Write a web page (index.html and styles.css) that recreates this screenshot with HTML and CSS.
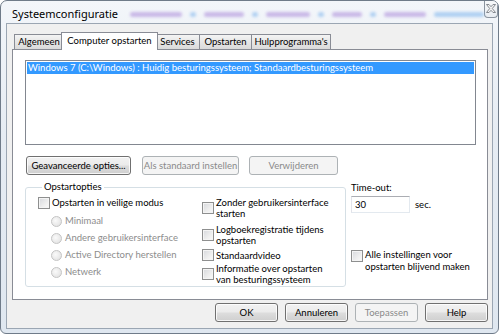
FILE: index.html
```html
<!DOCTYPE html>
<html lang="nl">

<head>
    <meta charset="UTF-8">
    <meta name="viewport" content="width=device-width, initial-scale=1.0">
    <title>Systeemconfiguratie</title>
    <link rel="stylesheet" href="styles.css">
</head>

<body>
    <div class="window">
        <div class="titlebar">
            <svg class="app-icon" width="16" height="16" viewBox="0 0 16 16">
                <rect x="1.5" y="1.5" width="12" height="10" rx="1" fill="#4f7fc4" stroke="#3b5a8a" />
                <rect x="3" y="3" width="9" height="7" fill="#9fd0f5" />
                <path d="M5 7 l2 2 l4 -5" fill="none" stroke="#2a5d9e" stroke-width="1.2" />
                <path d="M6 12 h3 l1 2 h-5 z" fill="#8a8f96" />
            </svg>
            <span class="title">Systeemconfiguratie</span>
            <div class="glass">
                <span class="blob purple w52"></span>
                <span class="blob blue w6"></span>
                <span class="blob purple w40"></span>
                <span class="blob blue w6"></span>
                <span class="blob purple w44"></span>
                <span class="blob blue w6"></span>
                <span class="blob purple w30"></span>
                <span class="blob blue w6"></span>
                <span class="blob purple w42"></span>
                <span class="blob blue w50"></span>
            </div>
            <div class="close">
                <svg width="12" height="11" viewBox="0 0 12 11">
                    <path d="M1.5 1.5 h2.5 l2 2.2 l2 -2.2 h2.5 l-3.2 4 l3.2 4 h-2.5 l-2 -2.2 l-2 2.2 h-2.5 l3.2 -4 z"
                        fill="#f4f4f4" stroke="#7a7f86" stroke-width="0.9" stroke-linejoin="round" />
                </svg>
            </div>
        </div>

        <div class="client">
            <ul class="tabs">
                <li class="tab t-alg">Algemeen</li>
                <li class="tab active">Computer opstarten</li>
                <li class="tab t-srv">Services</li>
                <li class="tab t-ops">Opstarten</li>
                <li class="tab t-hlp">Hulpprogramma's</li>
            </ul>

            <div class="panel">
                <div class="listbox">
                    <div class="item selected">Windows 7 (C:\Windows) : Huidig besturingssysteem; Standaardbesturingssysteem</div>
                </div>

                <div class="btn-row">
                    <button class="btn b-adv">Geavanceerde opties...</button>
                    <button class="btn b-std" disabled>Als standaard instellen</button>
                    <button class="btn b-del" disabled>Verwijderen</button>
                </div>

                <div class="options">
                    <fieldset class="group">
                        <legend>Opstartopties</legend>
                        <div class="col-left">
                            <label class="check"><span class="box"></span>Opstarten in veilige modus</label>
                            <div class="radios">
                                <label class="radio"><span class="dot"></span>Minimaal</label>
                                <label class="radio"><span class="dot"></span>Andere gebruikersinterface</label>
                                <label class="radio"><span class="dot"></span>Active Directory herstellen</label>
                                <label class="radio"><span class="dot"></span>Netwerk</label>
                            </div>
                        </div>
                        <div class="col-right">
                            <label class="check two r1"><span class="box"></span><span>Zonder gebruikersinterface<br>starten</span></label>
                            <label class="check two r2"><span class="box"></span><span>Logboekregistratie tijdens<br>opstarten</span></label>
                            <label class="check r3"><span class="box"></span><span>Standaardvideo</span></label>
                            <label class="check two r4"><span class="box"></span><span>Informatie over opstarten<br>van besturingssysteem</span></label>
                        </div>
                    </fieldset>

                    <div class="timeout">
                        <div class="t-label">Time-out:</div>
                        <div class="t-field">
                            <span class="textbox">30</span>
                            <span>sec.</span>
                        </div>
                        <label class="check keep"><span class="box"></span><span>Alle instellingen voor<br>opstarten blijvend maken</span></label>
                    </div>
                </div>
            </div>

            <div class="footer">
                <button class="btn b-foot">OK</button>
                <button class="btn b-foot">Annuleren</button>
                <button class="btn b-foot" disabled>Toepassen</button>
                <button class="btn b-foot">Help</button>
            </div>
        </div>
    </div>
</body>

</html>
```

FILE: styles.css
```css
* {
    padding: 0;
    margin: 0;
    box-sizing: border-box;
}

body {
    width: 500px;
    height: 335px;
    background-color: #fff;
    font-family: Lato, "Liberation Sans", sans-serif;
    font-size: 9.5px;
    line-height: 12px;
    color: #000;
    overflow: hidden;
}

/* venster met glasrand */
.window {
    width: 499px;
    height: 334px;
    border: 1px solid #6f7b89;
    border-radius: 7px 7px 6px 6px;
    background: linear-gradient(180deg, #f3f6fa 0%, #e6ecf3 40%, #dfe7f0 100%);
    padding: 0 5px 4px 5px;
    display: flex;
    flex-direction: column;
    overflow: hidden;
}

.titlebar {
    height: 22px;
    display: flex;
    align-items: center;
    flex-shrink: 0;
}

.app-icon {
    margin-left: 2px;
    margin-top: 1px;
}

.title {
    margin-left: 4px;
    font-family: "Noto Sans", sans-serif;
    font-size: 11px;
    margin-top: 3px;
}

.glass {
    display: flex;
    align-items: center;
    gap: 8px;
    margin-left: 12px;
    margin-top: 4px;
    filter: blur(1.6px);
    opacity: 0.55;
}

.blob {
    height: 5px;
    border-radius: 3px;
}

.purple {
    background-color: #a887d8;
}

.blue {
    background-color: #79b2ec;
}

.w6 { width: 6px; }
.w30 { width: 30px; }
.w40 { width: 40px; }
.w42 { width: 42px; }
.w44 { width: 44px; }
.w50 { width: 50px; }
.w52 { width: 52px; }

.close {
    margin-left: auto;
    align-self: flex-start;
    margin-top: -1px;
    width: 40px;
    height: 18px;
    border: 1px solid #8a939e;
    border-top: none;
    border-radius: 0 0 4px 4px;
    background: linear-gradient(180deg, #f8f9fb, #e9edf2);
    display: flex;
    align-items: center;
    justify-content: center;
}

/* clientgebied */
.client {
    flex: 1;
    background-color: #f0f0f0;
    border: 1px solid #9ba6b3;
    padding: 8px 4px 0 5px;
    display: flex;
    flex-direction: column;
}

.tabs {
    list-style: none;
    display: flex;
    align-items: flex-end;
    margin-left: 2px;
    height: 17px;
    position: relative;
    z-index: 1;
}

.tab {
    height: 15px;
    border: 1px solid #898c95;
    border-bottom: none;
    border-right: none;
    background: linear-gradient(180deg, #f4f4f4 0%, #e6e6e6 50%, #dadada 100%);
    line-height: 13px;
    white-space: nowrap;
    text-align: center;
}

.t-hlp {
    border-right: 1px solid #898c95;
}

.tab.active {
    height: 18px;
    margin: 0 -2px -1px -2px;
    background: #fff;
    border-right: 1px solid #898c95;
    line-height: 16px;
    position: relative;
}

.t-alg { width: 49px; }
.tab.active { width: 97px; }
.t-srv { width: 43px; border-left: none; }
.t-ops { width: 52px; }
.t-hlp { width: 80px; }

.panel {
    height: 251px;
    background-color: #fff;
    border: 1px solid #898c95;
    padding: 10px 12px 0 12px;
}

.listbox {
    width: 451px;
    height: 85px;
    border: 1px solid #828790;
    padding: 1px;
}

.item {
    height: 12px;
    line-height: 12px;
    padding-left: 1px;
    white-space: nowrap;
}

.item.selected {
    background-color: #3399ff;
    color: #fff;
}

/* knoppen */
.btn-row {
    display: flex;
    margin-top: 11px;
    margin-left: 1px;
}

.btn {
    height: 19px;
    font-family: inherit;
    font-size: 9.5px;
    color: #000;
    border: 1px solid #707070;
    border-radius: 3px;
    background: linear-gradient(180deg, #f2f2f2 0%, #ebebeb 48%, #dddddd 52%, #cfcfcf 100%);
    box-shadow: inset 0 0 0 1px rgba(255, 255, 255, 0.8);
    white-space: nowrap;
}

.btn:disabled {
    color: #8a8a8a;
    border-color: #adb2b5;
    background: #f4f4f4;
    box-shadow: none;
}

.b-adv { width: 105px; }
.b-std { width: 97px; margin-left: 11px; }
.b-del { width: 89px; margin-left: 10px; }

.options {
    display: flex;
    margin-top: 6px;
}

.group {
    width: 321px;
    height: 106px;
    border: 1px solid #d5dfe5;
    border-radius: 3px;
    padding: 4px 12px 0 12px;
    display: flex;
}

.group legend {
    margin-left: 4px;
    padding: 0 2px;
    line-height: 12px;
}

.col-left {
    width: 164px;
}

.check {
    display: flex;
    align-items: center;
    white-space: nowrap;
}

.box {
    width: 12px;
    height: 12px;
    flex-shrink: 0;
    margin-right: 2px;
    border: 1px solid #8e8f8f;
    background: linear-gradient(135deg, #d6d8dc 0%, #eeeeee 60%, #fafafa 100%);
    box-shadow: inset 0 0 0 1px #f4f4f4;
}

.radios {
    margin-left: 13px;
    margin-top: 6px;
    display: flex;
    flex-direction: column;
    gap: 5px;
}

.radio {
    display: flex;
    align-items: center;
    color: #8d8d8d;
    white-space: nowrap;
}

.dot {
    width: 11px;
    height: 11px;
    margin-right: 3px;
    border-radius: 50%;
    border: 1px solid #c4c4c4;
    background: radial-gradient(circle at 40% 40%, #fafafa 0%, #e6e6e6 70%, #dcdcdc 100%);
}

.col-right .check {
    line-height: 11px;
}

.r2 { margin-top: 5px; }
.r3 { margin-top: 3px; }
.r4 { margin-top: 2px; }

.timeout {
    margin-left: 5px;
    padding-top: 1px;
}

.t-label {
    line-height: 12px;
}

.t-field {
    display: flex;
    align-items: center;
    margin-top: 2px;
}

.textbox {
    width: 59px;
    height: 17px;
    border: 1px solid #abadb3;
    border-color: #abadb3 #e3e9ef #e3e9ef #e2e3ea;
    background-color: #fff;
    padding-left: 3px;
    line-height: 15px;
    margin-right: 5px;
}

.keep {
    margin-top: 36px;
    align-items: flex-start;
}

.keep .box {
    margin-top: 1px;
}

.footer {
    display: flex;
    justify-content: flex-end;
    gap: 7px;
    margin-top: 3px;
}

.b-foot {
    width: 63px;
    height: 19px;
}
```
